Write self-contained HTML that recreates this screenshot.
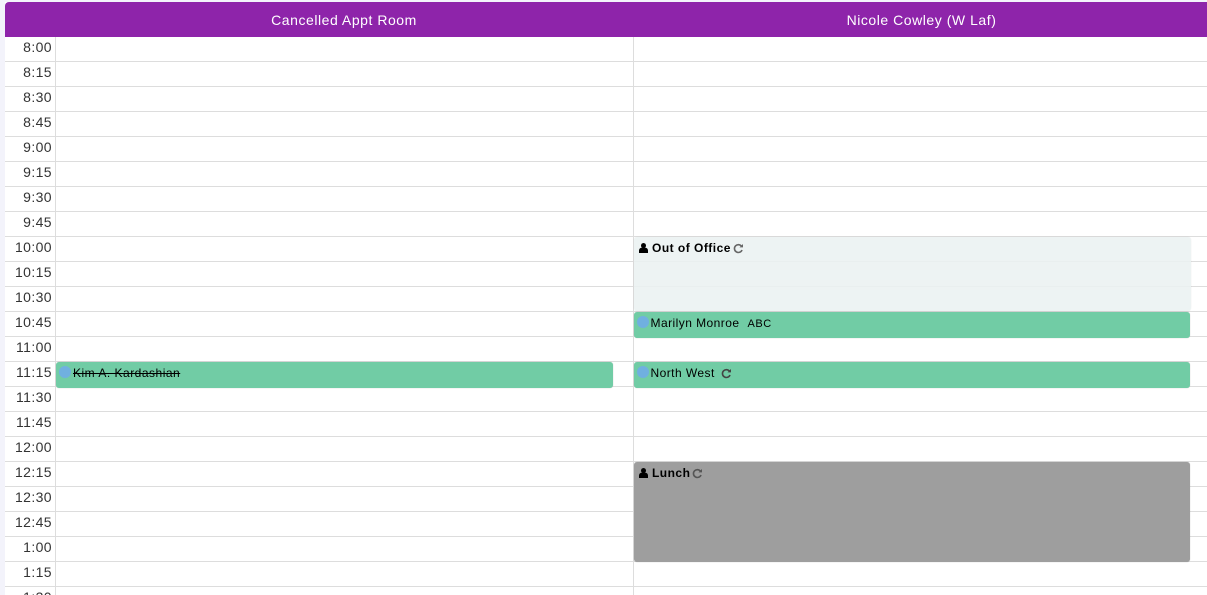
<!DOCTYPE html>
<html>
<head>
<meta charset="utf-8">
<style>
html,body{margin:0;padding:0;width:1207px;height:595px;overflow:hidden;background:#f3f3fb;font-family:"Liberation Sans",Arial,sans-serif;}
#wrap{position:absolute;left:0;top:0;width:1207px;height:595px;overflow:hidden;}
#main{position:absolute;left:5px;top:2px;width:1202px;height:593px;background:#fff;overflow:hidden;}
#head{position:absolute;left:5px;top:2px;width:1202px;height:35px;background:#8e24aa;border-top-left-radius:4px;}
.ht{position:absolute;top:2px;height:35px;line-height:36px;color:#fff;font-size:14px;letter-spacing:.54px;text-align:center;white-space:nowrap;}
.line{position:absolute;left:5px;width:1202px;height:1px;background:#dddddd;}
.v{position:absolute;top:37px;width:1px;height:558px;background:#dddddd;}
.t{position:absolute;left:5px;width:47px;text-align:right;font-size:14px;color:#333;line-height:20px;letter-spacing:.4px;white-space:nowrap;}
.ev{position:absolute;box-sizing:border-box;border-radius:3px;}
.g{background:#71cca5;box-shadow:0 0 1px rgba(0,0,0,.25);height:26px;}
.dot{position:absolute;width:12px;height:12px;border-radius:50%;background:#70b0e0;}
.n{position:absolute;font-size:12px;color:#000;line-height:14px;letter-spacing:.45px;white-space:nowrap;}
.b{font-weight:bold;color:#000;letter-spacing:.48px;}
svg{position:absolute;display:block;}
</style>
</head>
<body>
<div id="wrap">
<div id="main"></div>
<div id="head"></div>
<div class="ht" style="left:55px;width:578px;">Cancelled Appt Room</div>
<div class="ht" style="left:634px;width:575px;">Nicole Cowley (W Laf)</div>

<div class="line" style="top:61px"></div>
<div class="line" style="top:86px"></div>
<div class="line" style="top:111px"></div>
<div class="line" style="top:136px"></div>
<div class="line" style="top:161px"></div>
<div class="line" style="top:186px"></div>
<div class="line" style="top:211px"></div>
<div class="line" style="top:236px"></div>
<div class="line" style="top:261px"></div>
<div class="line" style="top:286px"></div>
<div class="line" style="top:311px"></div>
<div class="line" style="top:336px"></div>
<div class="line" style="top:361px"></div>
<div class="line" style="top:386px"></div>
<div class="line" style="top:411px"></div>
<div class="line" style="top:436px"></div>
<div class="line" style="top:461px"></div>
<div class="line" style="top:486px"></div>
<div class="line" style="top:511px"></div>
<div class="line" style="top:536px"></div>
<div class="line" style="top:561px"></div>
<div class="line" style="top:586px"></div>
<div class="v" style="left:55px"></div>
<div class="v" style="left:633px"></div>

<div class="t" style="top:37px">8:00</div>
<div class="t" style="top:62px">8:15</div>
<div class="t" style="top:87px">8:30</div>
<div class="t" style="top:112px">8:45</div>
<div class="t" style="top:137px">9:00</div>
<div class="t" style="top:162px">9:15</div>
<div class="t" style="top:187px">9:30</div>
<div class="t" style="top:212px">9:45</div>
<div class="t" style="top:237px">10:00</div>
<div class="t" style="top:262px">10:15</div>
<div class="t" style="top:287px">10:30</div>
<div class="t" style="top:312px">10:45</div>
<div class="t" style="top:337px">11:00</div>
<div class="t" style="top:362px">11:15</div>
<div class="t" style="top:387px">11:30</div>
<div class="t" style="top:412px">11:45</div>
<div class="t" style="top:437px">12:00</div>
<div class="t" style="top:462px">12:15</div>
<div class="t" style="top:487px">12:30</div>
<div class="t" style="top:512px">12:45</div>
<div class="t" style="top:537px">1:00</div>
<div class="t" style="top:562px">1:15</div>
<div class="t" style="top:587px">1:30</div>

<!-- Out of Office -->
<div class="ev" style="left:634px;top:237px;width:557px;height:74px;background:rgba(235,241,241,.88);box-shadow:0 0 1px rgba(0,0,0,.12);"></div>
<svg style="left:639px;top:243px" width="9" height="10" viewBox="0 0 9 10"><ellipse cx="4.5" cy="2.6" rx="2.5" ry="2.6" fill="#000"/><path d="M0 10V7.6C0 6 1.2 4.8 2.6 4.8H6.4C7.8 4.8 9 6 9 7.6V10Z" fill="#000"/></svg>
<div class="n b" style="left:652px;top:241px">Out of Office</div>
<svg style="left:733px;top:243px" width="11" height="11" viewBox="0 0 11 11"><path d="M8.6 3.4A3.9 3.9 0 1 0 9 7" fill="none" stroke="#666" stroke-width="1.6"/><path d="M6.5 4.4H10V1Z" fill="#666"/></svg>

<!-- Marilyn -->
<div class="ev g" style="left:634px;top:312px;width:556px;"></div>
<div class="dot" style="left:637px;top:316px"></div>
<div class="n" style="left:650.5px;top:316px">Marilyn Monroe</div>
<div class="n" style="left:747.5px;top:317px;font-size:11px;letter-spacing:.55px;">ABC</div>

<!-- North West -->
<div class="ev g" style="left:634px;top:362px;width:556px;"></div>
<div class="dot" style="left:637px;top:366px"></div>
<div class="n" style="left:650.5px;top:366px">North West</div>
<svg style="left:721px;top:368px" width="11" height="11" viewBox="0 0 11 11"><path d="M8.6 3.4A3.9 3.9 0 1 0 9 7" fill="none" stroke="#444" stroke-width="1.6"/><path d="M6.5 4.4H10V1Z" fill="#444"/></svg>

<!-- Kim -->
<div class="ev g" style="left:56px;top:362px;width:557px;"></div>
<div class="dot" style="left:59px;top:366px"></div>
<div class="n" style="left:73px;top:366px;text-decoration:line-through;letter-spacing:.5px;">Kim A. Kardashian</div>

<!-- Lunch -->
<div class="ev" style="left:634px;top:462px;width:556px;height:100px;background:#9e9e9e;box-shadow:0 0 1px rgba(0,0,0,.25);"></div>
<svg style="left:639px;top:468px" width="9" height="10" viewBox="0 0 9 10"><ellipse cx="4.5" cy="2.6" rx="2.5" ry="2.6" fill="#000"/><path d="M0 10V7.6C0 6 1.2 4.8 2.6 4.8H6.4C7.8 4.8 9 6 9 7.6V10Z" fill="#000"/></svg>
<div class="n b" style="left:652px;top:466px">Lunch</div>
<svg style="left:692px;top:468px" width="11" height="11" viewBox="0 0 11 11"><path d="M8.6 3.4A3.9 3.9 0 1 0 9 7" fill="none" stroke="#555" stroke-width="1.6"/><path d="M6.5 4.4H10V1Z" fill="#555"/></svg>
</div>
</body>
</html>
